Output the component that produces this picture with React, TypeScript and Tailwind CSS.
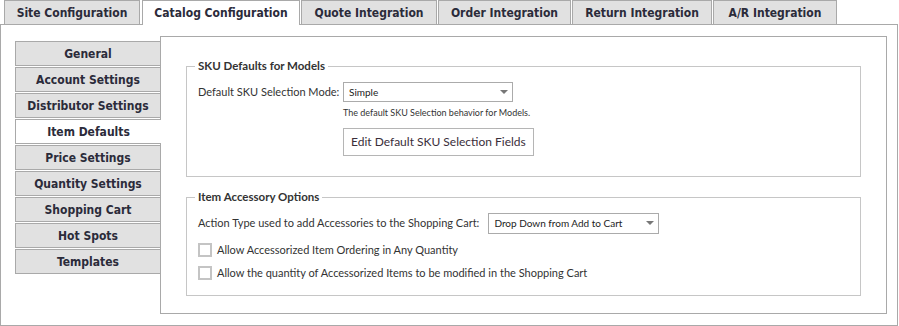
import React from "react";

const tabs = [
  { label: "Site Configuration", w: "w-[136px]" },
  { label: "Catalog Configuration", w: "w-[158px]", active: true },
  { label: "Quote Integration", w: "w-[136px]" },
  { label: "Order Integration", w: "w-[133px]" },
  { label: "Return Integration", w: "w-[140px]" },
  { label: "A/R Integration", w: "w-[124px]" },
];

const navItems = [
  "General",
  "Account Settings",
  "Distributor Settings",
  "Item Defaults",
  "Price Settings",
  "Quantity Settings",
  "Shopping Cart",
  "Hot Spots",
  "Templates",
];

const boldFont = "font-['DejaVu_Sans_Condensed','Liberation_Sans',sans-serif]";
const bodyFont = "font-['Lato','Open_Sans',sans-serif]";

function SelectBox({ value, className }: { value: string; className: string }) {
  return (
    <div
      className={`flex items-center justify-between border border-[#ababab] bg-white pl-[5px] pr-[4px] text-[10px] text-[#222] ${className}`}
    >
      <span className="whitespace-nowrap">{value}</span>
      <svg width="8" height="5" viewBox="0 0 8 5">
        <path d="M0 0 L8 0 L4 4 Z" fill="#777" />
      </svg>
    </div>
  );
}

function Checkbox() {
  return <span className="inline-block h-[14px] w-[14px] shrink-0 border-2 border-[#c4c4c4] bg-white" />;
}

export default function App() {
  return (
    <div className={`h-[326px] w-[899px] overflow-hidden bg-white ${bodyFont} text-[#333]`}>
      {/* top tabs */}
      <div className="flex items-end gap-[1px] pl-[4px]">
        {tabs.map((t) =>
          t.active ? (
            <div
              key={t.label}
              className={`relative z-10 -mb-px ml-[1px] flex h-[25px] ${t.w} items-center justify-center border border-b-0 border-[#a9a9a9] bg-white text-[12px] font-bold text-[#2b2b3a] ${boldFont}`}
            >
              {t.label}
            </div>
          ) : (
            <div
              key={t.label}
              className={`flex h-[24px] ${t.w} items-center justify-center border border-b-0 border-[#a9a9a9] bg-[#e1e1e1] text-[12px] font-bold text-[#2b2b3a] ${boldFont}`}
            >
              {t.label}
            </div>
          )
        )}
      </div>

      {/* panel */}
      <div className="flex h-[302px] w-[898px] items-start border border-[#a9a9a9] pl-[14px] pr-[10px] pt-[11px]">
        <div className="mt-[5px] flex w-[146px] shrink-0 flex-col gap-[1px]">
          {navItems.map((n) =>
            n === "Item Defaults" ? (
              <div
                key={n}
                className={`relative z-10 flex h-[25px] w-[146px] items-center justify-center border border-r-0 border-[#a9a9a9] bg-white text-[12px] font-bold text-[#2b2b3a] ${boldFont}`}
              >
                {n}
              </div>
            ) : (
              <div
                key={n}
                className={`flex h-[25px] w-[146px] items-center justify-center border border-[#a9a9a9] bg-[#e1e1e1] text-[12px] font-bold text-[#2b2b3a] ${boldFont}`}
              >
                {n}
              </div>
            )
          )}
        </div>

        <div className="-ml-px flex h-[278px] flex-1 flex-col gap-[12px] border border-[#a9a9a9] px-[25px] pt-[21px]">
          <fieldset className="h-[119px] border border-[#c6c6c6] px-[11px]">
            <legend className="-ml-[3px] px-[3px] text-[11.5px] font-bold leading-[16px] text-[#333]">
              SKU Defaults for Models
            </legend>
            <div className="mt-[8px] flex items-center">
              <span className="w-[145px] shrink-0 whitespace-nowrap text-[11px]">Default SKU Selection Mode:</span>
              <SelectBox value="Simple" className="h-[20px] w-[170px]" />
            </div>
            <div className="ml-[145px] mt-[4px] whitespace-nowrap text-[9px] leading-[13px]">
              The default SKU Selection behavior for Models.
            </div>
            <button className="ml-[145px] mt-[9px] h-[28px] whitespace-nowrap border border-[#b5b5b5] bg-white px-[7px] text-[12px] text-[#3a2e3a]">
              Edit Default SKU Selection Fields
            </button>
          </fieldset>

          <fieldset className="h-[107px] border border-[#c6c6c6] px-[11px]">
            <legend className="-ml-[3px] px-[3px] text-[11.5px] font-bold leading-[16px] text-[#333]">
              Item Accessory Options
            </legend>
            <div className="mt-[8px] flex items-center gap-[9px]">
              <span className="whitespace-nowrap text-[11px]">
                Action Type used to add Accessories to the Shopping Cart:
              </span>
              <SelectBox value="Drop Down from Add to Cart" className="h-[21px] w-[171px]" />
            </div>
            <label className="mt-[8px] flex h-[16px] items-center gap-[5px] whitespace-nowrap text-[11px] leading-[16px]">
              <Checkbox />
              Allow Accessorized Item Ordering in Any Quantity
            </label>
            <label className="mt-[7px] flex h-[16px] items-center gap-[5px] whitespace-nowrap text-[11px] leading-[16px]">
              <Checkbox />
              Allow the quantity of Accessorized Items to be modified in the Shopping Cart
            </label>
          </fieldset>
        </div>
      </div>
    </div>
  );
}
